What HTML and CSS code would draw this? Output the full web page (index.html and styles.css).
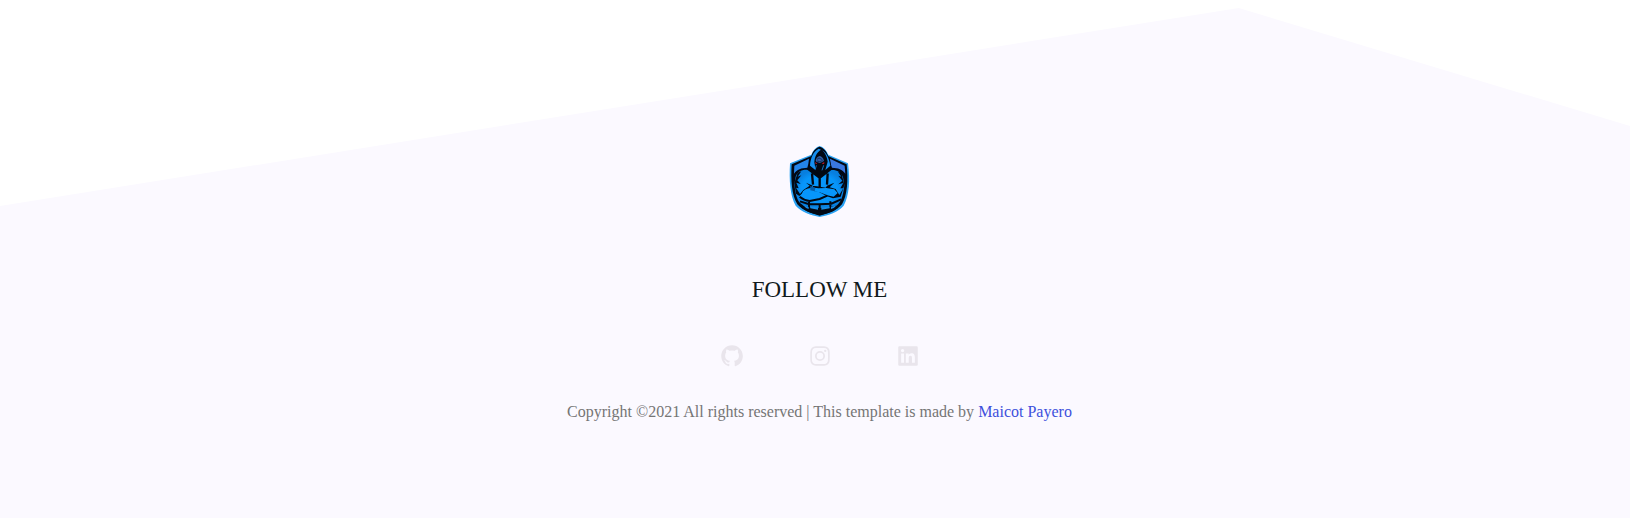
FILE: index.html
```html
<!DOCTYPE html>
<html lang="en">
<head>
<meta charset="utf-8">
<title>Footer</title>
<link rel="stylesheet" href="styles.css">
</head>
<body>
<footer class="footer">
  <svg class="logo" viewBox="0 0 240 252" role="img" aria-label="Hooded figure shield">
    <defs>
      <radialGradient id="shade"><stop offset="0.7" stop-color="#0796fb"/><stop offset="1" stop-color="#087fdf"/></radialGradient>
    </defs>
    <path d="M119 24C109 27 99 36 94 50L30 76C27 126 30 174 47 203C64 223 94 231 119 237C145 231 175 223 191 203C208 174 211 126 204 76L145 50C139 36 130 27 119 24Z" fill="#2aa2f3"/>
    <path d="M119 26C108 29 98 40 94 54L35 79C32 126 35 172 52 199C69 218 96 227 119 233C143 227 169 218 186 199C202 172 205 126 200 79L144 54C140 40 130 29 119 26Z" fill="#020914"/>
    <path d="M87 62L43 83L42 107C51 93 64 90 82 89L85 77Z" fill="#2485ea"/>
    <path d="M150 62L194 83L196 107C187 93 174 90 156 89L152 77Z" fill="#3a78e0"/>
    <path d="M88 96C67 93 53 100 47 116L43 139C46 166 50 184 60 195L71 203C93 212 145 212 171 202C184 192 190 171 193 142L189 118C182 100 168 94 151 96L119 119Z" fill="url(#shade)"/>
    <path d="M83 92L119 119L154 92M119 114V150M96 106L99 140M143 106L141 140" fill="none" stroke="#020914" stroke-width="7"/>
    <path d="M53 104L64 100L53 116L64 112L52 127L62 138L49 134L56 151L48 149L60 168L70 156L89 143L78 134L99 143L96 158L75 159L58 174L48 167L43 135ZM184 104L174 101L184 116L175 113L187 128L175 139L190 135L181 151L190 151L178 171L167 153L149 148L163 134L141 143L137 149L111 145L96 143L98 158L119 163L141 175L159 181L182 176L193 141Z" fill="#020914"/>
    <path d="M69 160C80 149 101 148 116 151L139 150L163 154L173 165L161 176L142 172L119 163L97 160L114 169L139 181L119 189L79 187L61 177Z" fill="#0796fb"/>
    <path d="M91 144L106 149L104 160L91 157Z" fill="#075eaa"/>
    <path d="M59 176Q72 187 89 189L119 183L142 173M60 190L85 198L119 199L154 197L183 184M87 190V210M119 199V221M151 190V210" fill="none" stroke="#020914" stroke-width="6"/>
    <path d="M55 195C71 211 94 216 119 221C145 216 170 209 184 194C171 223 145 225 119 231C92 225 66 219 55 195Z" fill="#020914"/>
    <path d="M69 201L86 207V213Q77 211 69 201ZM91 206L114 208V215L91 211ZM124 208L149 206V211L124 215ZM153 207L171 201Q163 211 153 213Z" fill="#168ce6"/>
    <path d="M119 28C103 33 91 54 87 82Q91 91 105 99L119 111L134 99Q149 91 153 82C148 54 136 33 119 28Z" fill="#020914"/>
    <path d="M116 32C100 40 91 61 90 83L107 97L103 73C104 55 111 43 123 35ZM126 37C136 44 141 58 143 71L136 96L151 83C147 60 139 43 126 37Z" fill="#168ff0"/>
    <path d="M107 67Q111 55 119 54Q128 56 132 68L128 71L119 75L109 71Z" fill="#315fa6"/>
    <path d="M111 64L117 60L127 65M111 69L119 71L128 68" fill="none" stroke="#061736" stroke-width="2"/>
    <path d="M105 73L112 76L108 78L106 76ZM133 73L125 76L130 78L133 76Z" fill="#d91c2b"/>
    <path d="M109 82L106 93M131 82L126 97" stroke="#1675c5" stroke-width="3"/>
  </svg>
  <h2 class="title">FOLLOW ME</h2>
  <nav class="social" aria-label="Social links">
    <a href="#github" aria-label="GitHub"><svg class="icon" viewBox="0 0 24 24"><path fill-rule="evenodd" d="M12.026 2c-5.509 0-9.974 4.465-9.974 9.974 0 4.406 2.857 8.145 6.821 9.465.499.09.679-.217.679-.481 0-.237-.008-.865-.011-1.696-2.775.602-3.361-1.338-3.361-1.338-.452-1.152-1.107-1.459-1.107-1.459-.905-.619.069-.605.069-.605 1.002.07 1.527 1.028 1.527 1.028.89 1.524 2.336 1.084 2.902.829.091-.645.351-1.085.635-1.334-2.214-.251-4.542-1.107-4.542-4.93 0-1.087.389-1.979 1.024-2.675-.101-.253-.446-1.268.099-2.64 0 0 .837-.269 2.742 1.021a9.582 9.582 0 0 1 2.496-.336 9.554 9.554 0 0 1 2.496.336c1.906-1.291 2.742-1.021 2.742-1.021.545 1.372.203 2.387.099 2.64.64.696 1.024 1.587 1.024 2.675 0 3.833-2.33 4.675-4.552 4.922.355.308.675.916.675 1.846 0 1.334-.012 2.41-.012 2.737 0 .267.178.577.687.479C19.146 20.115 22 16.379 22 11.974 22 6.465 17.535 2 12.026 2z"/></svg></a>
    <a href="#instagram" aria-label="Instagram"><svg class="icon" viewBox="0 0 24 24"><path d="M11.999 7.377a4.623 4.623 0 1 0 0 9.248 4.623 4.623 0 0 0 0-9.248zm0 7.627a3.004 3.004 0 1 1 0-6.008 3.004 3.004 0 0 1 0 6.008z"/><circle cx="16.806" cy="7.207" r="1.078"/><path d="M20.533 6.111A4.605 4.605 0 0 0 17.9 3.479a6.606 6.606 0 0 0-2.186-.42c-.963-.042-1.268-.054-3.71-.054s-2.755 0-3.71.054a6.554 6.554 0 0 0-2.184.42 4.6 4.6 0 0 0-2.633 2.632 6.585 6.585 0 0 0-.419 2.186c-.043.962-.056 1.267-.056 3.71 0 2.442 0 2.753.056 3.71.015.748.156 1.486.419 2.187a4.61 4.61 0 0 0 2.634 2.632 6.584 6.584 0 0 0 2.185.45c.963.042 1.268.055 3.71.055s2.755 0 3.71-.055a6.615 6.615 0 0 0 2.186-.419 4.613 4.613 0 0 0 2.633-2.633c.263-.7.404-1.438.419-2.186.043-.962.056-1.267.056-3.71s0-2.753-.056-3.71a6.581 6.581 0 0 0-.421-2.217zm-1.218 9.532a5.043 5.043 0 0 1-.311 1.688 2.987 2.987 0 0 1-1.712 1.711 4.985 4.985 0 0 1-1.67.311c-.95.044-1.218.055-3.654.055-2.438 0-2.687 0-3.655-.055a4.96 4.96 0 0 1-1.669-.311 2.985 2.985 0 0 1-1.719-1.711 5.08 5.08 0 0 1-.311-1.669c-.043-.95-.053-1.218-.053-3.654 0-2.437 0-2.686.053-3.655a5.038 5.038 0 0 1 .311-1.687c.305-.789.93-1.41 1.719-1.712a5.01 5.01 0 0 1 1.669-.311c.951-.043 1.218-.055 3.655-.055s2.687 0 3.654.055a4.96 4.96 0 0 1 1.67.311 2.991 2.991 0 0 1 1.712 1.712 5.08 5.08 0 0 1 .311 1.669c.043.951.055 1.218.055 3.655 0 2.436 0 2.698-.043 3.654z"/></svg></a>
    <a href="#linkedin" aria-label="LinkedIn"><svg class="icon" viewBox="0 0 24 24"><path d="M20 3H4a1 1 0 0 0-1 1v16a1 1 0 0 0 1 1h16a1 1 0 0 0 1-1V4a1 1 0 0 0-1-1zM8.339 18.337H5.667v-8.59h2.672v8.59zM7.003 8.574a1.548 1.548 0 1 1 0-3.096 1.548 1.548 0 0 1 0 3.096zm11.335 9.763h-2.669V14.16c0-.996-.018-2.277-1.388-2.277-1.39 0-1.601 1.086-1.601 2.207v4.248h-2.667v-8.59h2.56v1.174h.037c.355-.675 1.227-1.387 2.524-1.387 2.704 0 3.203 1.778 3.203 4.092v4.71z"/></svg></a>
  </nav>
  <p class="copyright">Copyright ©2021 All rights reserved | This template is made by <a class="author" href="#author">Maicot Payero</a></p>
</footer>
</body>
</html>
```
FILE: styles.css
```css
body {
  margin: 0;
  background: #fff;
  font-family: "Liberation Serif", "Times New Roman", serif;
}

.footer {
  box-sizing: border-box;
  min-height: 100vh;
  padding: 138px 0 80px 9px;
  display: flex;
  flex-direction: column;
  align-items: center;
  background: #fbf9ff;
  clip-path: polygon(0 206px, 76% 8px, 100% 126px, 100% 100%, 0 100%);
}

.logo {
  width: 80px;
  height: 84px;
}

.title {
  margin: 55px 0 40px;
  font-size: 23px;
  line-height: 26px;
  font-weight: 400;
  color: #111a1c;
}

.social {
  display: flex;
  gap: 62px;
}

.icon {
  display: block;
  width: 26px;
  height: 26px;
  fill: #e9e5ec;
}

.copyright {
  margin: 33px 0 0;
  font-size: 16px;
  line-height: 20px;
  color: #757575;
}

.author {
  color: #3d50dc;
  text-decoration: none;
}
```
